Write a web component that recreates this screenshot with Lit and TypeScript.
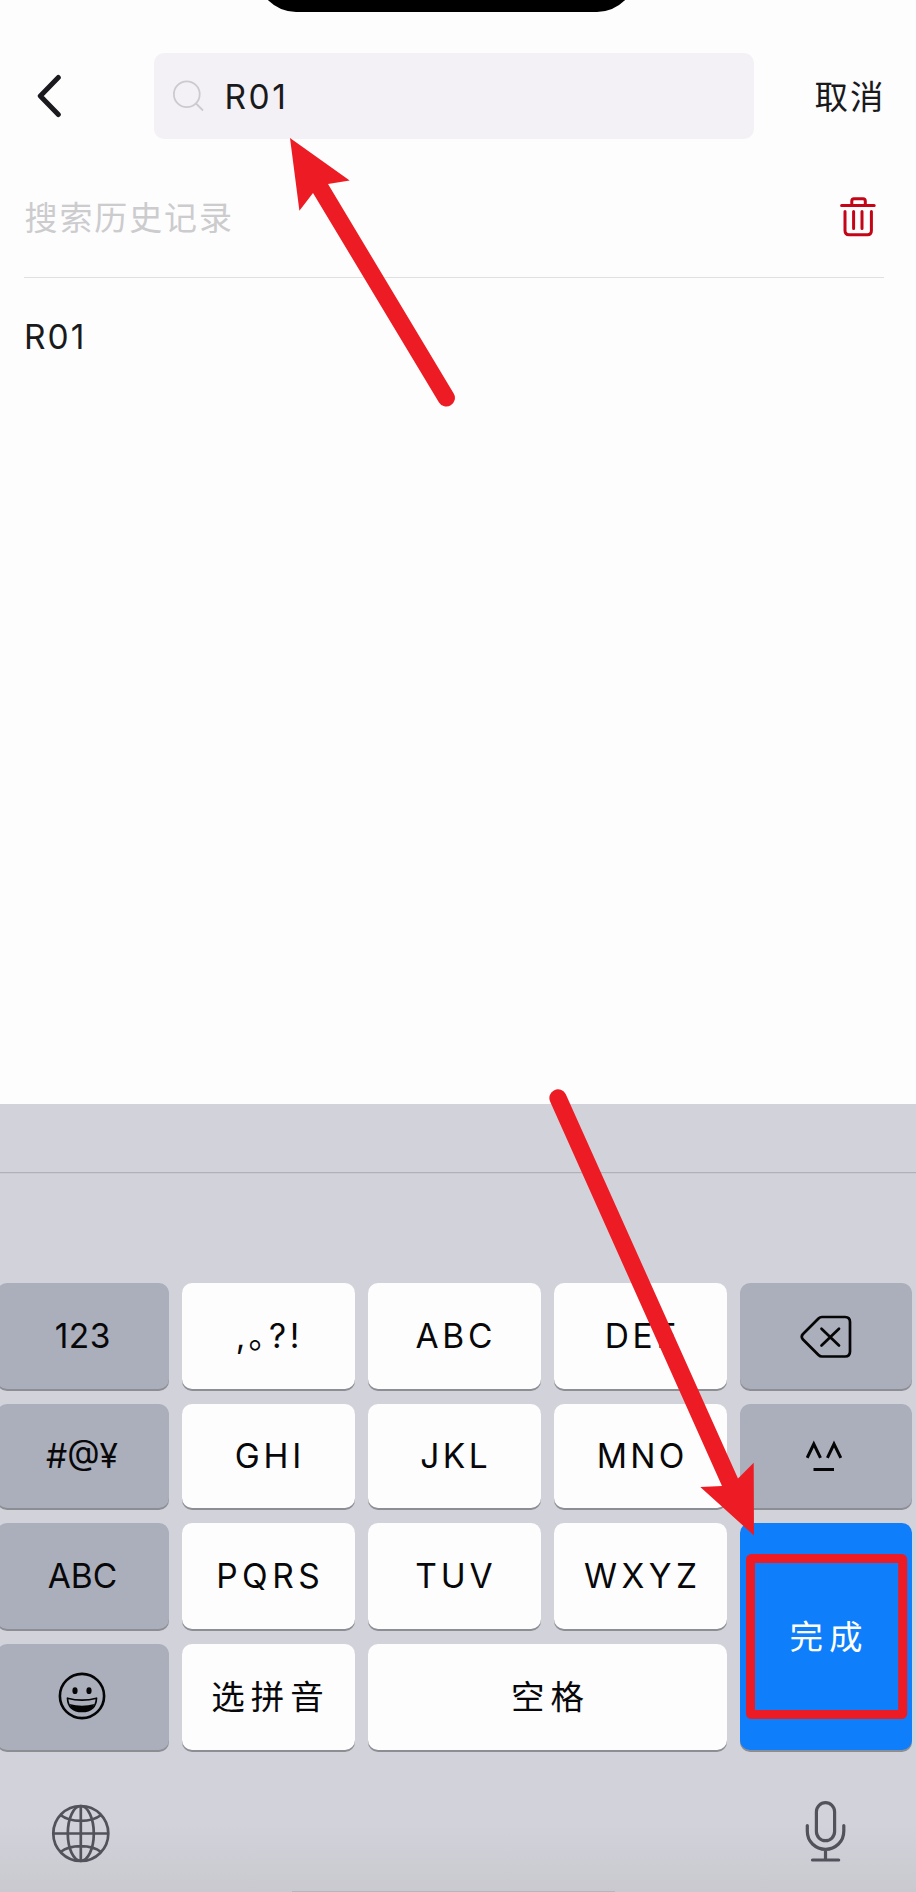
import { LitElement, html, css, svg } from "lit";
import { customElement, property } from "lit/decorators.js";
import { styleMap } from "lit/directives/style-map.js";

const backspaceIcon = svg`<svg width="54" height="44" viewBox="0 0 54 44" fill="none" stroke="#050506" stroke-width="2.700" stroke-linecap="round" stroke-linejoin="round">
  <path d="M23 3H46Q51 3 51 8V37.500Q51 42.500 46 42.500H23Q21 42.500 19.500 41L4 25.500Q1.500 22.700 4 20L19.500 4.500Q21 3 23 3Z"/>
  <path d="M22.500 14.700L40 31.500M40 14.700L22.500 31.500"/>
</svg>`;

const faceIcon = svg`<svg width="38" height="32" viewBox="0 0 38 32" fill="none" stroke="#050506" stroke-width="3">
  <path d="M1.200 17.800L7.800 4L14.500 17.800M21.400 17.800L28 4L34.800 17.800"/>
  <path d="M7.500 29.500H28"/>
</svg>`;

const smileIcon = svg`<svg width="50" height="50" viewBox="0 0 50 50" fill="none">
  <circle cx="25" cy="24" r="22.100" stroke="#050506" stroke-width="2.600"/>
  <ellipse cx="18" cy="18.700" rx="2.600" ry="3.400" fill="#050506"/>
  <ellipse cx="32" cy="18.700" rx="2.600" ry="3.400" fill="#050506"/>
  <path d="M10.500 26.200Q25 30 39.500 26.200Q38.800 39.500 25 39.500Q11.200 39.500 10.500 26.200Z" stroke="#050506" stroke-width="1.700" stroke-linejoin="round"/>
  <path d="M12.500 32Q25 35.500 37.500 32Q35 39.500 25 39.500Q15 39.500 12.500 32Z" fill="#050506"/>
</svg>`;

@customElement("kb-key")
export class KbKey extends LitElement {
  @property() kind = "light";
  @property({ type: Number }) spacing = 0;
  @property({ type: Number }) shift = 0;

  static styles = css`
    :host { display: grid; min-width: 0; }
    .key {
      display: flex; align-items: center; justify-content: center;
      border-radius: 10px; background: #fdfdfd; color: #08080a;
      box-shadow: 0 2px 0 #8d8e94;
      font: 400 33.500px/40px "Inter", "Noto Sans CJK SC", sans-serif;
      white-space: pre;
    }
    .dark { background: #abaebb; }
    .blue { background: #0e7efb; color: #fff; }
    svg { display: block; }
  `;

  render() {
    const { spacing, shift } = this;
    const label = {
      letterSpacing: `${spacing}px`,
      marginRight: `${-spacing}px`,
      paddingRight: `${2 * shift}px`,
    };
    return html`<div class="key ${this.kind}"><span style=${styleMap(label)}><slot></slot></span></div>`;
  }
}

@customElement("app-root")
export class AppRoot extends LitElement {
  static styles = css`
    :host {
      display: flex; flex-direction: column; position: relative;
      width: 916px; height: 1892px; overflow: hidden;
      background: #fdfdfd; color: #1a1a1d;
      font-family: "Inter", "Noto Sans CJK SC", sans-serif; font-weight: 400;
    }
    svg { display: block; flex: none; }
    .status { height: 53px; box-sizing: border-box; padding-left: 257px; }
    .island { width: 379px; height: 12px; overflow: hidden; display: flex; align-items: flex-end; }
    .pill { width: 379px; height: 80px; flex: none; border-radius: 39px; background: #000; }
    .top { display: flex; align-items: center; height: 86px; padding: 0 32px 0 36px; }
    .search {
      display: flex; align-items: center; width: 600px; height: 86px; margin-left: 89.500px;
      border-radius: 10px; background: #f3f1f5; box-sizing: border-box; padding-left: 18px;
    }
    .value { font-size: 33.500px; letter-spacing: 2.500px; margin-left: 19px; line-height: 40px; padding-top: 1px; }
    .cancel { margin-left: auto; font-size: 33.500px; letter-spacing: 2px; margin-right: -1.500px; line-height: 44px; padding-top: 2px; }
    .history {
      display: flex; align-items: center; justify-content: space-between;
      margin: 0 32px 0 24px; height: 138px; border-bottom: 1px solid #e0e0e2;
    }
    .title { font-size: 33px; letter-spacing: 1.900px; color: #cccbce; margin: 19px 0 0 0.500px; line-height: 44px; }
    .trash { margin: 18px 7.500px 0 0; }
    .item { font-size: 33.500px; letter-spacing: 2px; line-height: 40px; margin: 39px 0 0 24px; }
    .keyboard {
      margin-top: auto; height: 788px; display: flex; flex-direction: column;
      background: linear-gradient(#d2d2db 0, #d2d2db 720px, #c9c9cf 788px);
    }
    .bar { height: 68px; border-bottom: 1px solid #b0b0b9; box-shadow: 0 1px 0 #cbcbd4; }
    .keys {
      display: grid; margin: 110px 4px 0 -3px; gap: 15px 13px;
      grid-template-columns: 172px 173px 173px 173px 172px;
      grid-template-rows: 106px 104px 106px 106px;
    }
    .tall { grid-row: 3 / 5; grid-column: 5; }
    .wide { grid-column: 3 / 5; }
    .foot { display: flex; justify-content: space-between; align-items: flex-start; padding: 50px 68px 0 50px; }
    .home { width: 323px; height: 1px; background: #b5b5bc; margin: auto auto 0 292px; }
    .marks { position: absolute; left: 0; top: 0; }
  `;

  render() {
    return html`
      <div class="status"><div class="island"><div class="pill"></div></div></div>
      <div class="top">
        <svg width="28" height="44" viewBox="0 0 28 44" fill="none" stroke="#1b1a1f" stroke-width="5" stroke-linecap="round" stroke-linejoin="round"><path d="M22.300 3.500L4.300 22L22.300 40.500"/></svg>
        <div class="search">
          <svg width="34" height="34" viewBox="0 0 34 34" fill="none" stroke="#cbcacd" stroke-width="1.800"><circle cx="14.800" cy="15.200" r="12.900"/><path d="M24 24.500L31 31.500"/></svg>
          <span class="value">R01</span>
        </div>
        <span class="cancel">取消</span>
      </div>
      <div class="history">
        <span class="title">搜索历史记录</span>
        <svg class="trash" width="38" height="42" viewBox="0 0 38 42" fill="none" stroke="#c40518" stroke-width="3" stroke-linecap="round" stroke-linejoin="round">
          <path d="M2.600 9.500H35.200M12.800 9V5Q12.800 2.700 15 2.700H24Q26.300 2.700 26.300 5V9M6 15.500V34.500Q6 38.800 10 38.800H28.500Q32.400 38.800 32.400 34.500V15.500M14.600 15.500V32.500M23 15.500V32.500"/>
        </svg>
      </div>
      <div class="item">R01</div>
      <div class="keyboard">
        <div class="bar"></div>
        <div class="keys">
          <kb-key kind="dark" spacing="0.500" shift="0.500">123</kb-key>
          <kb-key spacing="3.500" shift="1">,｡?!</kb-key>
          <kb-key spacing="3.800" shift="0.500">ABC</kb-key>
          <kb-key spacing="3.800">DEF</kb-key>
          <kb-key kind="dark">${backspaceIcon}</kb-key>
          <kb-key kind="dark" shift="1">#@¥</kb-key>
          <kb-key spacing="3.800" shift="0.500">GHI</kb-key>
          <kb-key spacing="3.500" shift="0.500">JKL</kb-key>
          <kb-key spacing="3.200">MNO</kb-key>
          <kb-key kind="dark" shift="1">${faceIcon}</kb-key>
          <kb-key kind="dark" shift="0.500">ABC</kb-key>
          <kb-key spacing="4.500" shift="0.500">PQRS</kb-key>
          <kb-key spacing="3.800" shift="0.500">TUV</kb-key>
          <kb-key spacing="4.500">WXYZ</kb-key>
          <kb-key class="tall" kind="blue" spacing="6" shift="-0.500">完成</kb-key>
          <kb-key kind="dark" shift="1">${smileIcon}</kb-key>
          <kb-key spacing="6" shift="1">选拼音</kb-key>
          <kb-key class="wide" spacing="6">空格</kb-key>
        </div>
        <div class="foot">
          <svg width="62" height="66" viewBox="0 0 62 66" fill="none" stroke="#51525a" stroke-width="2.700">
            <circle cx="30.800" cy="33.500" r="27.500"/><ellipse cx="30.800" cy="33.500" rx="13" ry="27.500"/>
            <path d="M30.800 6V61M3.200 33.500H58.400M10.500 15Q18 20.800 30.800 20.800Q43.600 20.800 51.100 15M10.500 52Q18 46.200 30.800 46.200Q43.600 46.200 51.100 52"/>
          </svg>
          <svg width="44" height="66" viewBox="0 0 44 66" fill="none" stroke="#51525a" stroke-width="3.200" stroke-linecap="round">
            <rect x="12.400" y="2.700" width="18.200" height="38" rx="9.100"/>
            <path d="M3.300 25.500V31Q3.300 39 8.500 44Q14 49.300 21.500 49.300Q29 49.300 34.500 44Q39.800 39 39.800 31V25.500M21.500 49.300V60M8.500 60H34.700"/>
          </svg>
        </div>
        <div class="home"></div>
      </div>
      <svg class="marks" width="916" height="1892" viewBox="0 0 916 1892" fill="#ed1c24">
        <path d="M290 138L349.700 180.500L328 184L453.700 393.600A8.500 8.500 0 0 1 439 402.400L313 193L299.400 210.800Z"/>
        <path d="M754 1535.500L700.300 1487L722 1486L550.200 1101.700A8.500 8.500 0 0 1 565.800 1094.300L738 1478.400L753.700 1462.700Z"/>
        <rect x="750.500" y="1558.500" width="152.200" height="156" rx="1" fill="none" stroke="#ed1c24" stroke-width="9" stroke-linejoin="round"/>
      </svg>
    `;
  }
}
